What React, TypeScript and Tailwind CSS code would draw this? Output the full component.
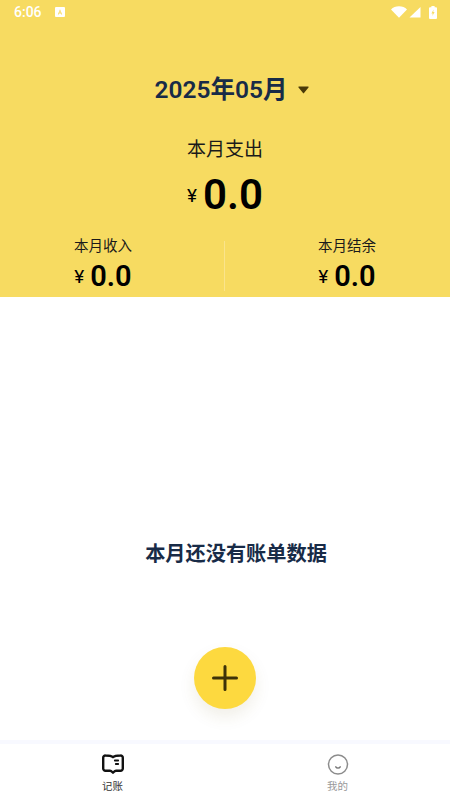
const font = { fontFamily: 'Roboto, "Noto Sans CJK SC", sans-serif' };

function Money({ big }: { big?: boolean }) {
  return (
    <div className="flex items-center gap-[6px]">
      <span className="text-[19px] leading-none text-black">¥</span>
      <span className={big ? "text-[42px] leading-none font-semibold text-black" : "text-[29px] leading-none font-semibold text-black"}>0.0</span>
    </div>
  );
}

function Stat({ label }: { label: string }) {
  return (
    <div className="flex flex-1 flex-col items-center">
      <div className="text-[14.5px] leading-[20px] text-[#1a1a1a]">{label}</div>
      <div className="mt-[5px]"><Money /></div>
    </div>
  );
}

export default function App() {
  return (
    <div style={font} className="flex h-[801px] w-[450px] flex-col overflow-hidden bg-white">
      <div className="flex h-[297px] flex-col bg-[#f7db61]">
        <div className="flex h-[24px] items-center justify-between pl-[14px] pr-[13px] text-white">
          <div className="flex items-center gap-[13px]">
            <span className="text-[14px] leading-none font-medium">6:06</span>
            <svg width="10" height="10" viewBox="0 0 10 10">
              <path fillRule="evenodd" fill="#fff" d="M0 1a1 1 0 0 1 1-1h8a1 1 0 0 1 1 1v8a1 1 0 0 1-1 1H1a1 1 0 0 1-1-1zM5 2.200 2.800 7.600h1l.4-1h1.600l.4 1h1zM5 4l.5 1.600h-1z" />
            </svg>
          </div>
          <div className="flex items-center">
            <svg width="16" height="12" viewBox="0 0 16 12"><path fill="#fff" d="M0 3.400C2 1.400 4.800.3 8 .3s6 1.100 8 3.100l-8 8.300z" /></svg>
            <svg className="ml-[2px]" width="12" height="12" viewBox="0 0 12 12"><path fill="#fff" d="M11.500 1v10.500H.5z" /></svg>
            <svg className="ml-[8px]" width="8" height="13" viewBox="0 0 8 13">
              <path fillRule="evenodd" fill="#fff" d="M2.400 0h3.200v1.200H7a1 1 0 0 1 1 1V12a1 1 0 0 1-1 1H1a1 1 0 0 1-1-1V2.200a1 1 0 0 1 1-1h1.400zM4.600 3.400 2.400 7.400h1.400L3.400 10 5.600 6H4.200z" />
            </svg>
          </div>
        </div>
        <div className="mt-[50px] ml-[14px] flex items-center justify-center">
          <span className="text-[24.5px] leading-[32px] font-semibold text-[#182b47]">2025年05月</span>
          <svg className="ml-[11px]" width="11" height="8" viewBox="0 0 11 8"><path fill="#4a3a08" d="M1 .5h9a.6.6 0 0 1 .5 1L6 7a.6.6 0 0 1-1 0L.5 1.500A.6.6 0 0 1 1 .5z" /></svg>
        </div>
        <div className="mt-[30px] text-center text-[19px] leading-[28px] text-[#1a1a1a]">本月支出</div>
        <div className="mt-[10px] flex justify-center"><Money big /></div>
        <div className="relative mt-[21px] flex gap-[38px]">
          <Stat label="本月收入" />
          <div className="absolute left-[224px] top-[4px] h-[50px] w-px bg-[#fae48c]" />
          <Stat label="本月结余" />
        </div>
      </div>
      <div className="flex flex-1 flex-col items-center">
        <div className="mt-[244px] ml-[22px] text-[20.2px] leading-[26px] font-semibold text-[#182b47]">本月还没有账单数据</div>
        <button className="mt-[80px] flex h-[62px] w-[62px] items-center justify-center rounded-full bg-[#fdd93f] shadow-[0_8px_16px_rgba(120,100,30,0.10)]">
          <svg width="26" height="26" viewBox="0 0 26 26"><path d="M13 1.500v23M1.500 13h23" stroke="#3d3208" strokeWidth="3" strokeLinecap="round" /></svg>
        </button>
      </div>
      <div className="h-[4px] bg-[#f8f9ff]" />
      <div className="flex h-[57px]">
        <div className="flex flex-1 flex-col items-center pt-[10px]">
          <svg width="22" height="21" viewBox="0 0 22 21" fill="none">
            <path d="M11 3.200C9.500 1.800 7 1.500 3.500 1.500a2.200 2.200 0 0 0-2.300 2.200v10.800a2.200 2.200 0 0 0 2.300 2.200H8c1.300 0 2 1 3 2 1-1 1.700-2 3-2h4.500a2.200 2.200 0 0 0 2.300-2.200V3.700a2.200 2.200 0 0 0-2.300-2.200C15 1.500 12.500 1.800 11 3.200z" stroke="#111" strokeWidth="2.400" strokeLinejoin="round" />
            <path d="M12.800 6.500h3.400M13.800 10h2.400" stroke="#111" strokeWidth="1.800" strokeLinecap="round" />
          </svg>
          <span className="mt-[4px] text-[10.500px] leading-[15px] text-[#333]">记账</span>
        </div>
        <div className="flex flex-1 flex-col items-center pt-[10px]">
          <svg width="22" height="21" viewBox="0 0 22 21" fill="none">
            <circle cx="11" cy="10.500" r="9.500" stroke="#8c8c8c" strokeWidth="1.500" />
            <path d="M8.800 12.800a2.500 2.500 0 0 0 4.400 0" stroke="#777" strokeWidth="1.500" strokeLinecap="round" />
          </svg>
          <span className="mt-[4px] text-[10.500px] leading-[15px] text-[#999]">我的</span>
        </div>
      </div>
    </div>
  );
}
